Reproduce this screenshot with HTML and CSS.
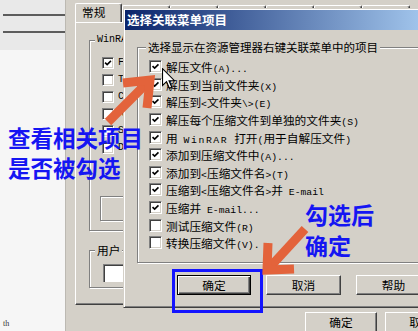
FILE: index.html
```html
<!DOCTYPE html>
<html lang="zh-CN">
<head>
<meta charset="utf-8">
<title>选择关联菜单项目</title>
<link rel="stylesheet" href="styles.css">
</head>
<body>
<div class="screen">
  <div class="leftpane">
    <div class="lp-top">
      <div class="lp-line"></div>
      <div class="lp-line"></div>
    </div>
    <div class="lp-body"><span class="lp-txt">th</span></div>
  </div>

  <div class="bgwin">
    <div class="tabs">
      <div class="tab sel">常规</div>
      <div class="tab off"></div>
      <div class="tab off"></div>
      <div class="tab off"></div>
      <div class="tab off"></div>
      <div class="tab off"></div>
      <div class="tab off"></div>
    </div>
    <div class="panel">
      <div class="g g1">
        <div class="g-label mono">WinRAR 集成</div>
        <div class="bgrows">
          <div class="bgrow"><span class="cb on"><svg viewBox="0 0 12 12"><path d="M2.5 5.5 L5 8 L9.5 3.5"/></svg></span><span class="mono">F</span></div>
          <div class="bgrow"><span class="cb"></span><span class="mono">T</span></div>
          <div class="bgrow"><span class="cb"></span><span class="mono">C</span></div>
          <div class="bgrow"><span class="cb"></span><span class="mono">A</span></div>
          <div class="bgrow"><span class="cb"></span><span class="mono">S</span></div>
          <div class="bgrow"><span class="cb"></span><span class="mono">D</span></div>
        </div>
        <div class="g1-box"></div>
      </div>
      <div class="g g2">
        <div class="g-label">用户</div>
        <div class="field"></div>
      </div>
    </div>
    <div class="bgbtns">
      <div class="btn">确定</div>
      <div class="btn">取消</div>
    </div>
  </div>

  <div class="fg">
    <div class="title">选择关联菜单项目</div>
    <div class="fg-body">
      <div class="fg-group">
        <div class="fg-label">选择显示在资源管理器右键关联菜单中的项目</div>
        <div class="items">
          <div class="item"><span class="cb on"><svg viewBox="0 0 13 13"><path d="M3 6 L5.5 8.5 L10 4"/></svg></span><span>解压文件<span class="l">(A)...</span></span></div>
          <div class="item"><span class="cb on"><svg viewBox="0 0 13 13"><path d="M3 6 L5.5 8.5 L10 4"/></svg></span><span>解压到当前文件夹<span class="l">(X)</span></span></div>
          <div class="item"><span class="cb on"><svg viewBox="0 0 13 13"><path d="M3 6 L5.5 8.5 L10 4"/></svg></span><span>解压到<span class="l">&lt;</span>文件夹<span class="l">\&gt;(E)</span></span></div>
          <div class="item"><span class="cb on"><svg viewBox="0 0 13 13"><path d="M3 6 L5.5 8.5 L10 4"/></svg></span><span>解压每个压缩文件到单独的文件夹<span class="l">(S)</span></span></div>
          <div class="item"><span class="cb on"><svg viewBox="0 0 13 13"><path d="M3 6 L5.5 8.5 L10 4"/></svg></span><span>用<span class="l"> </span><span class="l wide">WinRAR</span><span class="l"> </span>打开<span class="l">(</span>用于自解压文件<span class="l">)</span></span></div>
          <div class="item"><span class="cb on"><svg viewBox="0 0 13 13"><path d="M3 6 L5.5 8.5 L10 4"/></svg></span><span>添加到压缩文件中<span class="l">(A)...</span></span></div>
          <div class="item"><span class="cb on"><svg viewBox="0 0 13 13"><path d="M3 6 L5.5 8.5 L10 4"/></svg></span><span>添加到<span class="l">&lt;</span>压缩文件名<span class="l">&gt;(T)</span></span></div>
          <div class="item"><span class="cb on"><svg viewBox="0 0 13 13"><path d="M3 6 L5.5 8.5 L10 4"/></svg></span><span>压缩到<span class="l">&lt;</span>压缩文件名<span class="l">&gt;</span>并<span class="l"> E-mail</span></span></div>
          <div class="item"><span class="cb on"><svg viewBox="0 0 13 13"><path d="M3 6 L5.5 8.5 L10 4"/></svg></span><span>压缩并<span class="l"> E-mail...</span></span></div>
          <div class="item"><span class="cb"></span><span>测试压缩文件<span class="l">(R)</span></span></div>
          <div class="item"><span class="cb"></span><span>转换压缩文件<span class="l">(V).</span></span></div>
        </div>
      </div>
      <div class="fg-btns">
        <div class="btn def">确定</div>
        <div class="btn">取消</div>
        <div class="btn">帮助</div>
      </div>
    </div>
  </div>

  <svg class="cursor" width="13" height="22" viewBox="0 0 12 20">
    <path d="M0.5 0.5 L0.5 16 L4.2 12.4 L6.8 18.6 L9 17.6 L6.5 11.6 L11.5 11.6 Z" fill="#fff" stroke="#000" stroke-width="1"/>
  </svg>

  <div class="hl"></div>

  <svg class="arrows" width="418" height="331" viewBox="0 0 418 331">
    <g fill="none" stroke="#e3633b" stroke-width="9" stroke-linejoin="miter">
      <path d="M108 122 L148 82"/>
      <path d="M123 83 L150 80 L147 108"/>
      <path d="M305 229 L271 266"/>
      <path d="M268 243 L267 270 L294 269"/>
    </g>
  </svg>

  <div class="note note1">查看相关项目<br>是否被勾选</div>
  <div class="note note2">勾选后<br>确定</div>
</div>
</body>
</html>
```

FILE: styles.css
```css
* { box-sizing: border-box; }
html, body { margin: 0; padding: 0; }
body {
  width: 418px;
  height: 331px;
  overflow: hidden;
  background: #d4d0c8;
  font-family: "Noto Sans CJK SC", "Noto Sans", sans-serif;
  font-size: 11.7px;
  color: #000;
}
.screen {
  position: relative;
  width: 418px;
  height: 331px;
  display: flex;
  overflow: hidden;
}

/* left pane */
.leftpane {
  width: 65px;
  flex: none;
  display: flex;
  flex-direction: column;
  background: #f6f6f6;
}
.lp-top {
  height: 50px;
  background: #e9e9e9;
  padding: 14px 0 0 3px;
}
.lp-line {
  height: 2px;
  background: #5c5c5c;
  margin-bottom: 15px;
}
.lp-body {
  flex: 1;
  display: flex;
  align-items: flex-end;
  padding: 0 0 3px 3px;
}
.lp-txt {
  font-family: "Liberation Serif", serif;
  font-size: 8px;
  color: #333;
}

/* background window */
.bgwin {
  flex: 1;
  min-width: 0;
  background: #d4d0c8;
  border-left: 1px solid #bcb9b2;
  padding: 3px 0 0 9px;
  display: flex;
  flex-direction: column;
}
.tabs {
  display: flex;
  height: 19px;
  align-items: flex-end;
  flex: none;
}
.tab {
  flex: none;
  width: 47px;
  height: 19px;
  border-top: 1px solid #fff;
  border-left: 1px solid #fff;
  border-right: 1px solid #404040;
  box-shadow: inset -1px 0 #808080;
  border-radius: 2px 2px 0 0;
  padding-left: 6px;
  line-height: 16px;
}
.tab.off {
  height: 17px;
  width: 48px;
}
.panel {
  flex: none;
  width: 420px;
  height: 283px;
  border-top: 1px solid #fff;
  border-left: 1px solid #fff;
  border-bottom: 1px solid #404040;
  box-shadow: inset 0 -1px #808080;
  padding: 17px 0 0 13px;
}
.g {
  border: 1px solid #808080;
  box-shadow: inset 1px 1px #fff, 1px 1px #fff;
}
.g-label {
  width: fit-content;
  margin: -7px 0 0 5px;
  padding: 0 2px;
  background: #d4d0c8;
  line-height: 12px;
  white-space: nowrap;
}
.mono {
  font-family: "Liberation Mono", monospace;
  font-size: 10px;
}
.g1 {
  width: 400px;
  height: 191px;
  padding-left: 12px;
}
.g1 .g-label {
  margin-left: -7px;
}
.bgrows {
  margin-top: 8px;
}
.bgrow {
  height: 17px;
  display: flex;
  align-items: center;
  gap: 4px;
}
.bgrow .cb {
  width: 12px;
  height: 12px;
}
.g1-box {
  margin: 40px 0 0 -2px;
  width: 100px;
  height: 25px;
  border: 1px solid #808080;
  box-shadow: inset 1px 1px #fff, 1px 1px #fff;
}
.g2 {
  margin-top: 19px;
  width: 400px;
  height: 38px;
}
.field {
  margin: 8px 0 0 13px;
  width: 60px;
  height: 18px;
  background: #fff;
  border-top: 1px solid #808080;
  border-left: 1px solid #808080;
  box-shadow: inset 1px 1px #404040;
}
.bgbtns {
  flex: none;
  display: flex;
  gap: 8px;
  margin-top: 7px;
  padding-left: 230px;
}
.bgbtns .btn {
  width: 72px;
  height: 24px;
  flex: none;
}

/* checkbox */
.cb {
  flex: none;
  width: 13px;
  height: 13px;
  background: #fff;
  border-top: 1px solid #808080;
  border-left: 1px solid #808080;
  border-bottom: 1px solid #fff;
  border-right: 1px solid #fff;
  box-shadow: inset 1px 1px #404040, inset -1px -1px #d4d0c8;
  display: flex;
}
.cb svg {
  width: 100%;
  height: 100%;
}
.cb path {
  fill: none;
  stroke: #000;
  stroke-width: 1.9;
}

/* buttons */
.btn {
  flex: none;
  width: 75px;
  height: 20px;
  background: #d4d0c8;
  border-top: 1px solid #fff;
  border-left: 1px solid #fff;
  border-right: 1px solid #404040;
  border-bottom: 1px solid #404040;
  box-shadow: inset -1px -1px #808080;
  text-align: center;
  line-height: 18px;
}
.btn.def {
  width: 74px;
  border: 1px solid #000;
  box-shadow: inset 1px 1px #fff, inset -1px -1px #404040, inset -2px -2px #808080;
}

/* foreground dialog */
.fg {
  position: absolute;
  left: 123px;
  top: 8px;
  width: 310px;
  height: 300px;
  background: #d4d0c8;
  border: 1px solid;
  border-color: #d4d0c8 #404040 #404040 #d4d0c8;
  box-shadow: inset 1px 1px #fff, inset -1px -1px #808080;
  padding: 1px;
}
.title {
  height: 20px;
  background: linear-gradient(to right, #0a246a, #a6caf0);
  color: #fff;
  font-weight: bold;
  font-size: 12.5px;
  line-height: 20px;
  padding-left: 2px;
  white-space: nowrap;
}
.fg-body {
  padding-left: 12px;
}
.fg-group {
  margin-top: 17px;
  width: 300px;
  height: 216px;
  border: 1px solid #808080;
  box-shadow: inset 1px 1px #fff, 1px 1px #fff;
}
.fg-label {
  width: fit-content;
  margin: -8px 0 0 8px;
  padding: 0 2px;
  background: #d4d0c8;
  line-height: 14px;
  font-size: 11.5px;
  white-space: nowrap;
}
.items {
  margin-top: 4px;
  padding-left: 11px;
}
.item {
  height: 17.6px;
  display: flex;
  align-items: center;
  gap: 4px;
  white-space: nowrap;
}
.l {
  font-family: "Liberation Mono", monospace;
  font-size: 9.75px;
  white-space: pre;
}
.l.wide {
  letter-spacing: 1.6px;
}
.fg-btns {
  display: flex;
  gap: 15px;
  margin: 12px 0 0 40px;
}

/* overlays */
.cursor {
  position: absolute;
  left: 162px;
  top: 68px;
}
.hl {
  position: absolute;
  left: 172px;
  top: 269px;
  width: 91px;
  height: 44px;
  border: 3px solid #1414ff;
}
.arrows {
  position: absolute;
  left: 0;
  top: 0;
  pointer-events: none;
}
.note {
  position: absolute;
  color: #1515f2;
  font-family: "Noto Sans CJK SC", sans-serif;
  font-weight: bold;
  white-space: nowrap;
}
.note1 {
  left: 8px;
  top: 122px;
  font-size: 22.5px;
  line-height: 30px;
}
.note2 {
  left: 305px;
  top: 199px;
  font-size: 23px;
  line-height: 31px;
}
```
